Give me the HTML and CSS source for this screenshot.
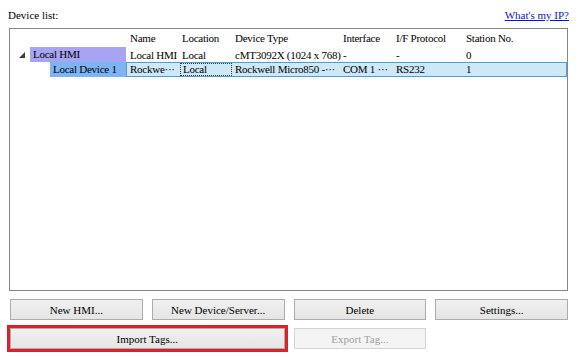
FILE: index.html
```html
<!DOCTYPE html>
<html>
<head>
<meta charset="utf-8">
<link rel="stylesheet" href="styles.css">
</head>
<body>
<div class="page">
  <div class="top">
    <span class="label">Device list:</span>
    <a class="link" href="#">What's my IP?</a>
  </div>
  <div class="list">
    <div class="row head">
      <div class="c tree"></div>
      <div class="c">Name</div>
      <div class="c">Location</div>
      <div class="c">Device Type</div>
      <div class="c">Interface</div>
      <div class="c">I/F Protocol</div>
      <div class="c">Station No.</div>
    </div>
    <div class="row r1">
      <div class="c tree"><span class="arrow"></span><span class="node hmi">Local HMI</span></div>
      <div class="c">Local HMI</div>
      <div class="c">Local</div>
      <div class="c">cMT3092X (1024 x 768)</div>
      <div class="c">-</div>
      <div class="c">-</div>
      <div class="c">0</div>
    </div>
    <div class="row r2">
      <div class="c tree"><span class="node dev">Local Device 1</span></div>
      <div class="sel">
        <div class="c">Rockwe···</div>
        <div class="c focus">Local</div>
        <div class="c">Rockwell Micro850 -···</div>
        <div class="c">COM 1 ···</div>
        <div class="c">RS232</div>
        <div class="c">1</div>
      </div>
    </div>
  </div>
  <div class="buttons">
    <div class="btn">New HMI...</div>
    <div class="btn">New Device/Server...</div>
    <div class="btn">Delete</div>
    <div class="btn">Settings...</div>
    <div class="btn span2 hl">Import Tags...</div>
    <div class="btn disabled">Export Tag...</div>
  </div>
</div>
</body>
</html>
```
FILE: styles.css
```css
html, body {
  margin: 0;
  padding: 0;
  background: #fff;
}
body {
  font-family: "Liberation Serif", "Times New Roman", serif;
  font-size: 11px;
  color: #000;
  width: 578px;
  height: 357px;
  overflow: hidden;
}
.page {
  padding: 7px 10px 0 9px;
}
.top {
  display: flex;
  justify-content: space-between;
  align-items: flex-end;
  height: 18px;
}
.label {
  margin-left: -1px;
  line-height: 14px;
  padding-bottom: 3px;
}
.link {
  color: #0b16c9;
  text-decoration: underline;
  line-height: 14px;
  margin-right: -1px;
  padding-bottom: 3px;
}
.list {
  margin-top: 3px;
  height: 263px;
  border: 1px solid #828790;
  box-sizing: border-box;
}
.row {
  display: grid;
  grid-template-columns: 116px 52px 53px 108px 53px 70px 1fr;
  height: 15px;
  align-items: center;
  line-height: 14px;
  white-space: nowrap;
  letter-spacing: -0.25px;
}
.row.head {
  height: 18px;
}
.c {
  padding-left: 4px;
  overflow: visible;
}
.tree {
  padding-left: 0;
  display: flex;
  align-items: center;
  height: 15px;
}
.arrow {
  width: 0;
  height: 0;
  border-left: 6px solid transparent;
  border-bottom: 6px solid #3d3d3d;
  margin-left: 9px;
  margin-right: 5px;
}
.node {
  height: 15px;
  line-height: 15px;
  padding-left: 3px;
  flex: 1;
}
.hmi {
  background: #a8a4f4;
}
.dev {
  background: #7db5f2;
  margin-left: 40px;
  padding-left: 3px;
}
.sel {
  grid-column: 2 / 8;
  display: grid;
  grid-template-columns: 52px 53px 108px 53px 70px 1fr;
  background: #cde8f6;
  border: 1px solid #4e9fd4;
  box-sizing: border-box;
  height: 15px;
  align-items: center;
  line-height: 13px;
}
.sel .c {
  padding-left: 3px;
}
.focus {
  outline: 1px dotted #333;
  outline-offset: -1px;
  height: 13px;
  margin-left: 1px;
}
.buttons {
  display: grid;
  grid-template-columns: repeat(4, 1fr);
  column-gap: 9px;
  row-gap: 8px;
  margin-top: 8px;
  margin-left: 1px;
}
.btn {
  height: 21px;
  box-sizing: border-box;
  border: 1px solid #acacac;
  background: linear-gradient(#f0f0f0, #e5e5e5);
  display: flex;
  align-items: center;
  justify-content: center;
  line-height: 14px;
}
.span2 {
  grid-column: 1 / 3;
}
.hl {
  outline: 3px solid #d8232d;
}
.disabled {
  background: #f4f4f4;
  border-color: #d5d5d5;
  color: #a0a0a0;
}
```
